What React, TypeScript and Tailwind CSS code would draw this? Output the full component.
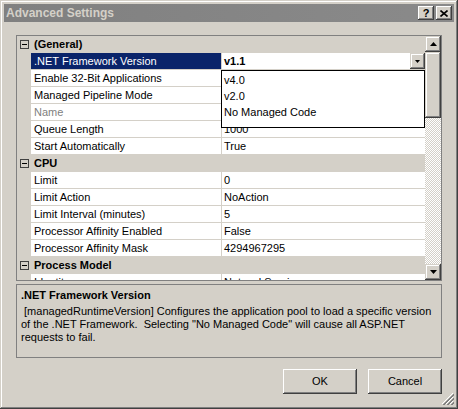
import React from 'react'

const raised =
  'shadow-[inset_-1px_-1px_#404040,inset_1px_1px_#ffffff,inset_-2px_-2px_#808080,inset_2px_2px_#d4d0c8]'
const scrollBtn =
  'shadow-[inset_-1px_-1px_#404040,inset_1px_1px_#d4d0c8,inset_-2px_-2px_#808080,inset_2px_2px_#ffffff]'

type Row =
  | { kind: 'cat'; label: string }
  | { kind: 'prop'; label: string; value: string; selected?: boolean; readOnly?: boolean }

// values of the three rows under the open list are covered, so left blank
const rows: Row[] = [
  { kind: 'cat', label: '(General)' },
  { kind: 'prop', label: '.NET Framework Version', value: 'v1.1', selected: true },
  { kind: 'prop', label: 'Enable 32-Bit Applications', value: '' },
  { kind: 'prop', label: 'Managed Pipeline Mode', value: '' },
  { kind: 'prop', label: 'Name', value: '', readOnly: true },
  { kind: 'prop', label: 'Queue Length', value: '1000' },
  { kind: 'prop', label: 'Start Automatically', value: 'True' },
  { kind: 'cat', label: 'CPU' },
  { kind: 'prop', label: 'Limit', value: '0' },
  { kind: 'prop', label: 'Limit Action', value: 'NoAction' },
  { kind: 'prop', label: 'Limit Interval (minutes)', value: '5' },
  { kind: 'prop', label: 'Processor Affinity Enabled', value: 'False' },
  { kind: 'prop', label: 'Processor Affinity Mask', value: '4294967295' },
  { kind: 'cat', label: 'Process Model' },
  { kind: 'prop', label: 'Identity', value: 'NetworkService' },
]

function Arrow({ dir }: { dir: 'up' | 'down' }) {
  return (
    <svg width="7" height="4" viewBox="0 0 7 4">
      {dir === 'up'
        ? <polygon points="3.5,0 7,4 0,4" fill="#000" />
        : <polygon points="0,0 7,0 3.5,4" fill="#000" />}
    </svg>
  )
}

function Category({ label }: { label: string }) {
  return (
    <div className="flex items-center h-[17px] bg-[#d4d0c8] border-b border-[#d4d0c8]">
      <div className="w-[14px] flex items-center justify-center">
        <div className="w-[9px] h-[9px] border border-[#404040] flex items-center justify-center">
          <div className="w-[5px] h-px bg-black" />
        </div>
      </div>
      <span className="pl-[3px] font-bold">{label}</span>
    </div>
  )
}

function Prop({ label, value, selected, readOnly }: { label: string; value: string; selected?: boolean; readOnly?: boolean }) {
  return (
    <div className="flex h-[17px]">
      <div className="w-[14px] bg-[#d4d0c8]" />
      <div
        className={`w-[191px] pl-[3px] flex items-center border-r border-b border-[#d4d0c8] whitespace-nowrap overflow-hidden ${
          selected ? 'bg-[#0a246a] text-white' : readOnly ? 'bg-white text-[#808080]' : 'bg-white text-black'
        }`}
      >
        {label}
      </div>
      <div className="flex-1 flex items-center bg-white border-b border-[#d4d0c8] pl-[2px] whitespace-nowrap overflow-hidden">
        <span className={selected ? 'font-bold flex-1' : 'flex-1'}>{value}</span>
        {selected && (
          <div className={`w-[15px] h-[16px] bg-[#d4d0c8] flex items-center justify-center ${scrollBtn}`}>
            <svg width="5" height="3" viewBox="0 0 5 3"><polygon points="0,0 5,0 2.5,3" fill="#000" /></svg>
          </div>
        )}
      </div>
    </div>
  )
}

export default function App() {
  return (
    <div
      className={`relative w-[458px] h-[409px] bg-[#d4d0c8] p-[4px] text-[11px] text-black ${scrollBtn}`}
      style={{ fontFamily: '"Liberation Sans", Arial, sans-serif' }}
    >
      {/* title bar */}
      <div className="h-[18px] flex items-center bg-gradient-to-r from-[#808080] to-[#8a8a8a] pl-[2px] pr-[2px]">
        <span className="flex-1 font-bold text-[12px] text-[#d4d0c8]">Advanced Settings</span>
        <div className={`w-[16px] h-[14px] bg-[#d4d0c8] mr-[2px] flex items-center justify-center font-bold text-[11px] leading-none ${raised}`}>?</div>
        <div className={`w-[16px] h-[14px] bg-[#d4d0c8] flex items-center justify-center ${raised}`}>
          <svg width="8" height="7" viewBox="0 0 8 7">
            <path d="M0.5 0.5 L7.5 6.5 M7.5 0.5 L0.5 6.5" stroke="#000" strokeWidth="1.6" />
          </svg>
        </div>
      </div>

      <div className="px-[12px] pt-[13px] flex flex-col">
        {/* property grid */}
        <div className="relative h-[246px] border border-[#808080] flex">
          <div className="w-[408px] overflow-hidden leading-none">
            {rows.map((r, i) =>
              r.kind === 'cat'
                ? <Category key={i} label={r.label} />
                : <Prop key={i} label={r.label} value={r.value} selected={r.selected} readOnly={r.readOnly} />
            )}
          </div>

          {/* scrollbar */}
          <div className="w-[16px] flex flex-col bg-[repeating-conic-gradient(#ffffff_0_25%,#d4d0c8_0_50%)] bg-[length:2px_2px]">
            <div className={`h-[16px] bg-[#d4d0c8] flex items-center justify-center ${scrollBtn}`}><Arrow dir="up" /></div>
            <div className={`h-[66px] bg-[#d4d0c8] ${scrollBtn}`} />
            <div className="flex-1" />
            <div className={`h-[16px] bg-[#d4d0c8] flex items-center justify-center ${scrollBtn}`}><Arrow dir="down" /></div>
          </div>

          {/* dropdown list */}
          <div className="absolute left-[204px] top-[34px] w-[204px] h-[58px] bg-white border border-black pt-px leading-none">
            {['v4.0', 'v2.0', 'No Managed Code'].map(o => (
              <div key={o} className="h-[16px] flex items-center pl-[2px]">{o}</div>
            ))}
          </div>
        </div>

        {/* description */}
        <div className="mt-[3px] h-[74px] border border-[#808080] pl-[4px] pt-[3px]">
          <div className="font-bold leading-[14px]">.NET Framework Version</div>
          <div className="mt-[3px] leading-[13px]">
            &nbsp;[managedRuntimeVersion] Configures the application pool to load a specific version<br />
            of the .NET Framework.&nbsp; Selecting "No Managed Code" will cause all ASP.NET<br />
            requests to fail.
          </div>
        </div>

        {/* buttons */}
        <div className="mt-[11px] flex justify-end gap-[11px]">
          <button className={`w-[74px] h-[25px] bg-[#d4d0c8] ${raised}`}>OK</button>
          <button className={`w-[74px] h-[25px] bg-[#d4d0c8] ${raised}`}>Cancel</button>
        </div>
      </div>

      {/* size grip */}
      <svg className="absolute right-[4px] bottom-[4px]" width="12" height="12" viewBox="0 0 12 12">
        <path d="M11 0 L0 11 M11 4 L4 11 M11 8 L8 11" stroke="#ffffff" strokeWidth="1" />
        <path d="M12 1 L1 12 M12 2 L2 12 M12 5 L5 12 M12 6 L6 12 M12 9 L9 12 M12 10 L10 12" stroke="#808080" strokeWidth="1" />
      </svg>
    </div>
  )
}
